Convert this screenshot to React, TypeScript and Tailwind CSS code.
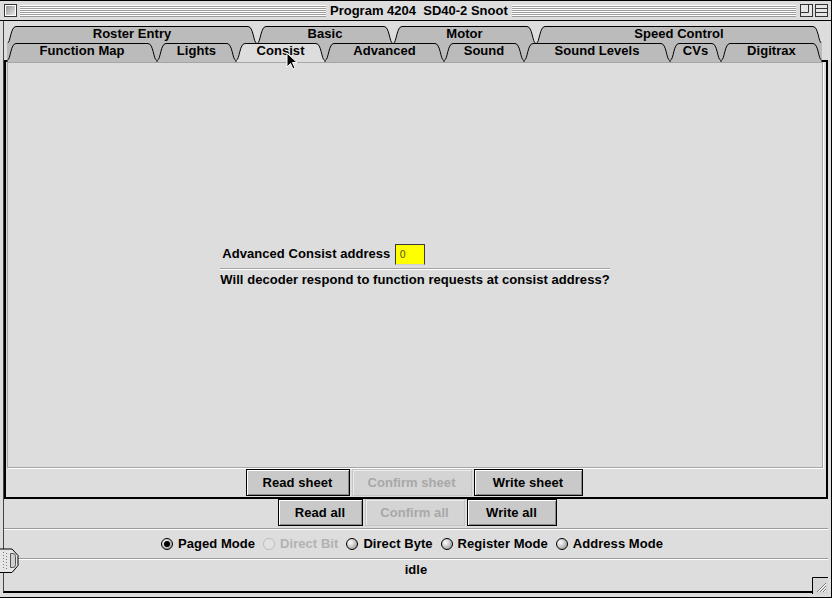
import React from 'react';

type TabDef = { label: string; w: number; cls: string; selected?: boolean };

const row1: TabDef[] = [
  { label: 'Roster Entry', w: 250, cls: 'w-[250px]' },
  { label: 'Basic', w: 136, cls: 'w-[136px]' },
  { label: 'Motor', w: 143, cls: 'w-[143px]' },
  { label: 'Speed Control', w: 286, cls: 'w-[286px]' },
];

const row2: TabDef[] = [
  { label: 'Function Map', w: 150, cls: 'w-[150px]' },
  { label: 'Lights', w: 79, cls: 'w-[79px]' },
  { label: 'Consist', w: 89, cls: 'w-[89px]', selected: true },
  { label: 'Advanced', w: 119, cls: 'w-[119px]' },
  { label: 'Sound', w: 80, cls: 'w-[80px]' },
  { label: 'Sound Levels', w: 146, cls: 'w-[146px]' },
  { label: 'CVs', w: 51, cls: 'w-[51px]' },
  { label: 'Digitrax', w: 101, cls: 'w-[101px]' },
];

const Tab: React.FC<TabDef> = ({ label, w, cls, selected }) => {
  const h = 17;
  const edge = `M0.5,${h} C3.5,${h} 3.5,0.5 9,0.5 H${w - 9} C${w - 3.5},0.5 ${w - 3.5},${h} ${w - 0.5},${h}`;
  return (
    <div className={`relative h-[17px] shrink-0 ${cls}`}>
      <svg className="absolute left-0 top-0 overflow-visible" width={w} height={selected ? 19 : 17}>
        <path d={`${edge} V19 H0.5 Z`} fill={selected ? '#dddddd' : '#bbbbbb'} stroke="none" />
        <path d={edge} fill="none" stroke="#000" strokeWidth={1} />
      </svg>
      <div className="relative flex h-full items-center justify-center pb-[2px] text-[13px] font-bold leading-none text-black">
        {label}
      </div>
    </div>
  );
};

const Btn: React.FC<{ label: string; cls: string; disabled?: boolean }> = ({ label, cls, disabled }) =>
  disabled ? (
    <div
      className={`${cls} flex h-[27px] items-center justify-center border border-[#c4c4c4] bg-[#d4d4d4] text-[#a8a8a8] shadow-[inset_1px_1px_0_#ececec]`}
    >
      {label}
    </div>
  ) : (
    <div
      className={`${cls} flex h-[27px] items-center justify-center border border-black bg-[#c9c9c9] text-black shadow-[inset_1px_1px_0_#ffffff,inset_-1px_-1px_0_#8a8a8a]`}
    >
      {label}
    </div>
  );

const Radio: React.FC<{ label: string; checked?: boolean; disabled?: boolean }> = ({ label, checked, disabled }) => (
  <div className="flex items-center gap-[5px]">
    {disabled ? (
      <div className="h-[12px] w-[12px] rounded-full border border-[#bdbdbd] bg-[#e2e2e2]" />
    ) : (
      <div className="flex h-[12px] w-[12px] items-center justify-center rounded-full border border-black bg-[radial-gradient(circle_at_35%_35%,#ffffff,#a6a6a6_75%)]">
        {checked && <div className="h-[6px] w-[6px] rounded-full bg-black" />}
      </div>
    )}
    <span className={disabled ? 'text-[#b2b2b2]' : 'text-black'}>{label}</span>
  </div>
);

const Stripes: React.FC<{ cls: string }> = ({ cls }) => (
  <div
    className={`${cls} h-[12px] bg-[image:repeating-linear-gradient(to_bottom,#ffffff_0px,#ffffff_1px,#9c9c9c_1px,#9c9c9c_2px)]`}
  />
);

export default function App() {
  return (
    <div className="relative flex h-[598px] w-[832px] flex-col overflow-hidden border-t border-r border-b border-black bg-[#dddddd] font-['Liberation_Sans',Arial,sans-serif] text-[13px] font-bold tracking-[0.05px] text-black">
      {/* Title bar */}
      <div className="flex h-[20px] shrink-0 items-center border-b border-black pl-[4px] pr-[3px]">
        <div className="h-[13px] w-[13px] border border-[#333] bg-[linear-gradient(135deg,#8c8c8c,#efefef)] shadow-[inset_1px_1px_0_#ffffff,inset_-1px_-1px_0_#ffffff]" />
        <Stripes cls="ml-[3px] w-[306px]" />
        <span className="whitespace-pre px-[4px] leading-none tracking-normal">Program 4204  SD40-2 Snoot</span>
        <Stripes cls="flex-1" />
        <svg className="ml-[4px]" width="13" height="13" viewBox="0 0 13 13">
          <rect x="0.5" y="0.5" width="12" height="12" fill="#e6e6e6" stroke="#333" />
          <path d="M0.5,8.5 H8.5 V0.5" fill="none" stroke="#333" />
        </svg>
        <svg className="ml-[2px]" width="13" height="13" viewBox="0 0 13 13">
          <rect x="0.5" y="0.5" width="12" height="12" fill="#e6e6e6" stroke="#333" />
          <path d="M0.5,4.5 H12.5 M0.5,8.5 H12.5" fill="none" stroke="#333" />
        </svg>
      </div>

      {/* Body */}
      <div className="ml-[3px] mr-[3px] flex h-[572px] shrink-0 flex-col border-b-2 border-l border-b-black border-l-[#444]">
        {/* Tabs */}
        <div className="h-[5px] shrink-0" />
        <div className="flex h-[17px] shrink-0 pl-[3px]">
          {row1.map((t) => (
            <Tab key={t.label} {...t} />
          ))}
        </div>
        <div className="relative z-10 ml-[3px] flex h-[17px] w-[815px] shrink-0 bg-[#bbbbbb]">
          {row2.map((t) => (
            <Tab key={t.label} {...t} />
          ))}
        </div>

        {/* Tab pane */}
        <div className="flex h-[439px] shrink-0 flex-col border-2 border-black">
          <div className="ml-px mr-[3px] flex h-[406px] shrink-0 items-center justify-center border border-[#a6a6a6] shadow-[1px_1px_0_#ffffff]">
            <div className="flex flex-col items-stretch">
              <div className="flex h-[21px] items-center pl-[2px]">
                <span className="pb-px leading-[15px]">Advanced Consist address</span>
                <div className="ml-[5px] flex h-[21px] w-[30px] items-center border border-[#3c3c3c] border-b-[#d0d0d0] bg-[#ffff00] pl-[3px] font-['DejaVu_Sans',sans-serif] text-[10px] font-normal text-[#5a5a20]">
                  0
                </div>
              </div>
              <div className="mt-[3px] h-[2px] border-t border-b border-t-[#a2a2a2] border-b-white" />
              <div className="mt-[2px] leading-[15px]">Will decoder respond to function requests at consist address?</div>
            </div>
          </div>
          <div className="flex h-[29px] shrink-0 justify-center gap-[2px] pr-[4px] pt-px">
            <Btn label="Read sheet" cls="w-[104px]" />
            <Btn label="Confirm sheet" cls="w-[120px]" disabled />
            <Btn label="Write sheet" cls="w-[109px]" />
          </div>
        </div>

        {/* Programmer buttons */}
        <div className="flex h-[29px] shrink-0 items-start justify-center gap-[2px] pl-[2px]">
          <Btn label="Read all" cls="w-[85px]" />
          <Btn label="Confirm all" cls="w-[100px]" disabled />
          <Btn label="Write all" cls="w-[90px]" />
        </div>
        <div className="h-[2px] shrink-0 border-t border-b border-t-[#9a9a9a] border-b-white" />

        {/* Mode selection */}
        <div className="flex h-[28px] shrink-0 items-center justify-center gap-[8px] pr-[8px]">
          <Radio label="Paged Mode" checked />
          <Radio label="Direct Bit" disabled />
          <Radio label="Direct Byte" />
          <Radio label="Register Mode" />
          <Radio label="Address Mode" />
        </div>
        <div className="h-[2px] shrink-0 border-t border-b border-t-[#9a9a9a] border-b-white" />

        {/* Status */}
        <div className="flex h-[31px] shrink-0 justify-center pt-[2px] leading-[15px]">idle</div>
      </div>

      {/* Drawer handle */}
      <svg className="absolute left-0 top-[547px]" width="19" height="26" viewBox="0 0 19 26">
        <path d="M0,1 H12 L18,7.5 V17.5 L12,24.5 H0" fill="#e6e6e6" stroke="#000" />
        <path d="M10.5,5.5 H13 Q15.5,5.5 15.5,8.5 V16.5 Q15.5,19.5 13,19.5 H10.5 Z" fill="#d0d0d0" stroke="#555" />
        {[4, 7, 10, 13, 16, 19].map((y) => (
          <g key={y} fill="#7a7a7a">
            <rect x="3" y={y} width="1" height="1" />
            <rect x="6" y={y + 1} width="1" height="1" />
          </g>
        ))}
      </svg>

      {/* Resize grip */}
      <svg className="absolute left-[812px] top-[576px]" width="16" height="17" viewBox="0 0 16 17">
        <rect x="0" y="0" width="16" height="17" fill="#d6d6d6" />
        <path d="M0.5,17 V0.5 H16" fill="none" stroke="#000" />
        <path d="M5,15 L14,6 M8,15 L14,9 M11,15 L14,12" stroke="#7a7a7a" />
        <path d="M6,15 L14,7 M9,15 L14,10 M12,15 L14,13" stroke="#ffffff" />
      </svg>

      {/* Mouse pointer */}
      <svg className="absolute left-[286px] top-[51px] z-20" width="13" height="19" viewBox="0 0 13 19">
        <path d="M1,1 L1,15 L4.5,11.5 L7,17 L9,16 L6.5,10.5 L11,10.5 Z" fill="#000" stroke="#fff" strokeWidth="1" />
      </svg>
    </div>
  );
}
